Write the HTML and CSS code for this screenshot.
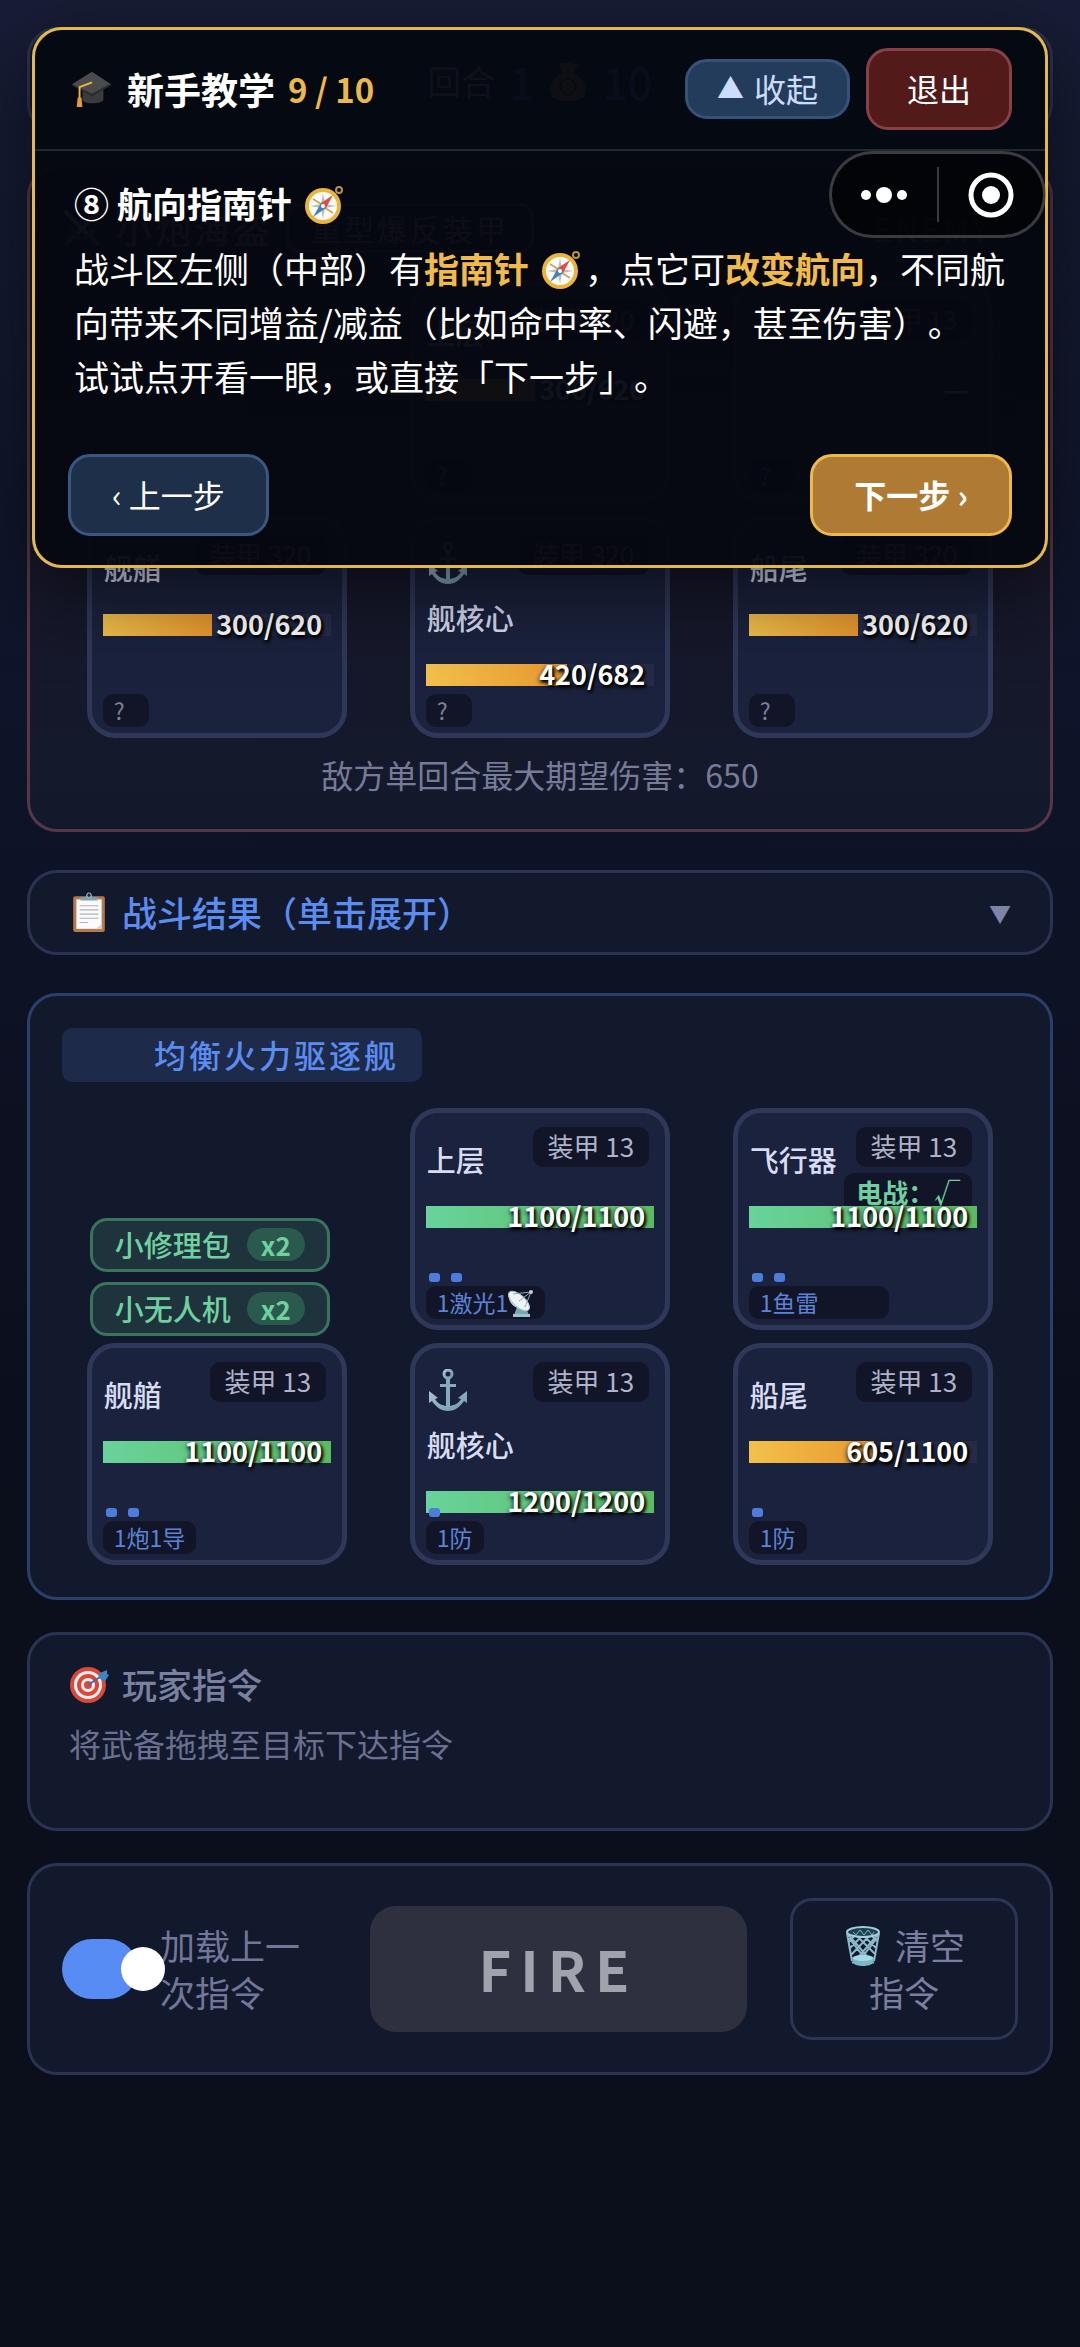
FILE: index.html
```html
<!DOCTYPE html>
<html lang="zh-CN">
<head>
    <meta charset="UTF-8">
    <meta name="viewport" content="width=device-width, initial-scale=1.0">
    <title>新手教学</title>
    <link rel="stylesheet" href="styles.css">
</head>
<body>

    <!-- shared icons -->
    <svg class="icon-defs" aria-hidden="true">
        <linearGradient id="steel" x1="0" y1="0" x2="1" y2="1">
            <stop offset="0" stop-color="#a9c3cf"/>
            <stop offset="1" stop-color="#6f98ab"/>
        </linearGradient>
        <symbol id="icon-cap" viewBox="0 0 42 38">
            <path d="M12 20v11c4 4 17 4 22 0V18l-12 6z" fill="#3a3b3d"/>
            <path d="M22 1l20 13-20 12L1 14z" fill="#4a4b4c"/>
            <path d="M22 24l20-11v2L22 27 1 15v-1z" fill="#2b2c2e"/>
            <path d="M22 12L9 17v12" fill="none" stroke="#f0b83c" stroke-width="2"/>
            <path d="M7 28h4l1 10H6z" fill="#dfa033"/>
        </symbol>
        <symbol id="icon-compass" viewBox="0 0 40 40">
            <circle cx="35" cy="5" r="3" fill="none" stroke="#b89343" stroke-width="2"/>
            <circle cx="19" cy="21" r="18" fill="#e9b53c"/>
            <circle cx="19" cy="21" r="14" fill="#fbfbf6"/>
            <path d="M19 8l2 11 11 2-11 2-2 11-2-11-11-2 11-2z" fill="#b9bec2"/>
            <path d="M9 14l8 5M29 28l-8-5" stroke="#c4a770" stroke-width="2"/>
            <path d="M29 10l-7 13-5-5z" fill="#dd4f45"/>
            <path d="M9 32l8-14 5 5z" fill="#4683ad"/>
            <circle cx="19" cy="21" r="2" fill="#fff"/>
        </symbol>
        <symbol id="icon-anchor" viewBox="0 0 38 42">
            <circle cx="19" cy="5" r="4" fill="none" stroke="url(#steel)" stroke-width="3"/>
            <path d="M17 9h4v28h-4zM11 15h16v3H11z" fill="#86aab9"/>
            <path d="M0 22l9 7-3 1c3 5 8 7 13 7s10-2 13-7l-3-1 9-7v12l-3-2c-4 6-9 10-16 10S7 38 3 32l-3 2z" fill="url(#steel)"/>
        </symbol>
        <symbol id="icon-clipboard" viewBox="0 0 30 38">
            <rect y="4" width="30" height="34" rx="2" fill="#b5794c"/>
            <path d="M3 7h24v28H3z" fill="#fafafa"/>
            <path d="M27 30v5h-5z" fill="#cfd4d8"/>
            <path d="M6 13h18M6 17h18M6 21h18M6 25h18M6 29h8" stroke="#aeb4b9"/>
            <path d="M7 8V5h5a3 3 0 0 1 6 0h5v3z" fill="#7fa5b5"/>
            <circle cx="15" cy="3" r="2" fill="#1a2135" stroke="#8fb3c1"/>
        </symbol>
        <symbol id="icon-target" viewBox="0 0 40 38">
            <circle cx="19" cy="20" r="18" fill="#d9483b"/>
            <circle cx="19" cy="20" r="14" fill="#f7efee"/>
            <circle cx="19" cy="20" r="11" fill="#d9483b"/>
            <circle cx="19" cy="20" r="7" fill="#f7efee"/>
            <circle cx="19" cy="20" r="4" fill="#d9483b"/>
            <path d="M19 20l12-8" stroke="#2f76b3" stroke-width="2"/>
            <path d="M29 13l2-5 7-3v4l2 1-4 6z" fill="#3b86c6"/>
        </symbol>
        <symbol id="icon-bin" viewBox="0 0 36 40">
            <path d="M2 7l5 28M34 7l-5 28M4 12L18 30l11 7M2 7l24 28M10 8l21 21M18 9l14 14M26 9l7 7M32 12L18 30 7 37M34 7L10 35M26 8L6 29M18 9L4 23M10 9l-6 7" fill="none" stroke="#8bb8c6" stroke-width="2"/>
            <ellipse cx="18" cy="6" rx="16" ry="5" fill="#1c4150" stroke="#a3cdd9" stroke-width="2"/>
            <path d="M8 6l3 3 4-5 4 5 4-5 4 5 2-3" fill="none" stroke="#86b4c3"/>
            <path d="M7 32c2-4 20-4 22 0l-1 5c-3 4-17 4-20 0z" fill="#7db6c7"/>
            <ellipse cx="18" cy="32" rx="10" ry="3" fill="#a6d9e6"/>
        </symbol>
        <symbol id="icon-dish" viewBox="0 0 26 28">
            <path d="M9 18l-3 8h15l-4-9z" fill="#7aa5b4"/>
            <path d="M5 25h17v3H5z" fill="#9ec3cf"/>
            <path d="M1 4c-2 9 5 17 19 17z" fill="#cfe0e5"/>
            <ellipse cx="11" cy="12" rx="13" ry="6" transform="rotate(42 11 12)" fill="#eef4f5" stroke="#a9c2ca"/>
            <path d="M11 12l12-9M17 18l6-15M5 5l18-2" stroke="#8fa9b2" fill="none"/>
            <circle cx="23" cy="3" r="2" fill="#bcd0d6"/>
        </symbol>
        <symbol id="icon-money" viewBox="0 0 40 42">
            <path d="M14 12L10 2h8l4-2 3 3h6l-5 9c10 6 14 14 12 22-2 7-10 8-18 8S4 41 2 34C0 26 4 18 14 12z" fill="#e0b040"/>
            <circle cx="20" cy="27" r="8" fill="none" stroke="#5c4410" stroke-width="2"/>
        </symbol>
        <symbol id="icon-swords" viewBox="0 0 40 40">
            <path d="M3 3l24 25M37 3L13 28" stroke="#a8bcc6" stroke-width="4"/>
            <path d="M22 31l9-9M18 31l-9-9M28 28l9 9M12 28l-9 9" stroke="#7d6a55" stroke-width="4"/>
        </symbol>
    </svg>

    <main class="page">
        <section class="panel status">
            <span>回合</span> <b>1</b>
            <svg class="icon"><use href="#icon-money"/></svg> <b>10</b>
        </section>

        <section class="panel enemy">
            <header class="ship-head">
                <svg class="icon"><use href="#icon-swords"/></svg>
                <h2 class="enemy-name">小炮海盗</h2>
                <span class="enemy-type">重型爆反装甲</span>
                <span class="enemy-label">ENEMY</span>
            </header>
            <div class="grid">
                <div></div>
                <article class="part">
                    <h3>上层</h3>
                    <div class="badges"><span class="badge">装甲 320</span></div>
                    <div class="hp"><div class="hp-fill mid" style="width: 48%"></div><span>300/620</span></div>
                    <div class="foot"><span class="tag unknown">?</span></div>
                </article>
                <article class="part">
                    <h3>&nbsp;</h3>
                    <div class="badges"><span class="badge">装甲 13</span></div>
                    <div class="hp none"><span>—</span></div>
                    <div class="foot"><span class="tag unknown">?</span></div>
                </article>
                <article class="part">
                    <h3>舰艏</h3>
                    <div class="badges"><span class="badge">装甲 320</span></div>
                    <div class="hp"><div class="hp-fill mid" style="width: 48%"></div><span>300/620</span></div>
                    <div class="foot"><span class="tag unknown">?</span></div>
                </article>
                <article class="part">
                    <h3><svg class="anchor"><use href="#icon-anchor"/></svg>舰核心</h3>
                    <div class="badges"><span class="badge">装甲 320</span></div>
                    <div class="hp"><div class="hp-fill mid" style="width: 62%"></div><span>420/682</span></div>
                    <div class="foot"><span class="tag unknown">?</span></div>
                </article>
                <article class="part">
                    <h3>船尾</h3>
                    <div class="badges"><span class="badge">装甲 320</span></div>
                    <div class="hp"><div class="hp-fill mid" style="width: 48%"></div><span>300/620</span></div>
                    <div class="foot"><span class="tag unknown">?</span></div>
                </article>
            </div>
            <p class="expect">敌方单回合最大期望伤害：650</p>
        </section>

        <button type="button" class="panel log">
            <svg class="icon"><use href="#icon-clipboard"/></svg>
            <span class="log-title">战斗结果（单击展开）</span>
            <span class="log-arrow">▼</span>
        </button>

        <section class="panel player">
            <header class="ship-head">
                <h2 class="player-name">均衡火力驱逐舰</h2>
            </header>
            <div class="grid">
                <div class="items">
                    <button type="button" class="item">小修理包 <span>x2</span></button>
                    <button type="button" class="item">小无人机 <span>x2</span></button>
                </div>
                <article class="part">
                    <h3>上层</h3>
                    <div class="badges"><span class="badge">装甲 13</span></div>
                    <div class="hp"><div class="hp-fill" style="width: 100%"></div><span>1100/1100</span></div>
                    <div class="foot">
                        <div class="dots"><i></i><i></i></div>
                        <span class="tag">1激光1<svg class="dish"><use href="#icon-dish"/></svg></span>
                    </div>
                </article>
                <article class="part">
                    <h3>飞行器</h3>
                    <div class="badges"><span class="badge">装甲 13</span><span class="badge ew">电战：√</span></div>
                    <div class="hp"><div class="hp-fill" style="width: 100%"></div><span>1100/1100</span></div>
                    <div class="foot">
                        <div class="dots"><i></i><i></i></div>
                        <span class="tag wide">1鱼雷</span>
                    </div>
                </article>
                <article class="part">
                    <h3>舰艏</h3>
                    <div class="badges"><span class="badge">装甲 13</span></div>
                    <div class="hp"><div class="hp-fill" style="width: 100%"></div><span>1100/1100</span></div>
                    <div class="foot">
                        <div class="dots"><i></i><i></i></div>
                        <span class="tag">1炮1导</span>
                    </div>
                </article>
                <article class="part">
                    <h3><svg class="anchor"><use href="#icon-anchor"/></svg>舰核心</h3>
                    <div class="badges"><span class="badge">装甲 13</span></div>
                    <div class="hp"><div class="hp-fill" style="width: 100%"></div><span>1200/1200</span></div>
                    <div class="foot">
                        <div class="dots"><i></i></div>
                        <span class="tag">1防</span>
                    </div>
                </article>
                <article class="part">
                    <h3>船尾</h3>
                    <div class="badges"><span class="badge">装甲 13</span></div>
                    <div class="hp"><div class="hp-fill mid" style="width: 55%"></div><span>605/1100</span></div>
                    <div class="foot">
                        <div class="dots"><i></i></div>
                        <span class="tag">1防</span>
                    </div>
                </article>
            </div>
        </section>

        <section class="panel orders">
            <h2><svg class="icon"><use href="#icon-target"/></svg>玩家指令</h2>
            <p>将武备拖拽至目标下达指令</p>
        </section>

        <section class="panel actions">
            <div class="reload">
                <input type="checkbox" id="reload" class="switch" checked>
                <label for="reload">加载上一次指令</label>
            </div>
            <button type="button" class="fire" disabled>FIRE</button>
            <button type="button" class="clear"><svg class="icon"><use href="#icon-bin"/></svg> 清空<br>指令</button>
        </section>
    </main>

    <aside class="guide">
        <header class="guide-head">
            <svg class="icon"><use href="#icon-cap"/></svg>
            <h1>新手教学</h1>
            <span class="step">9 / 10</span>
            <button type="button" class="btn fold"><span>▲</span>收起</button>
            <button type="button" class="btn quit">退出</button>
        </header>
        <div class="guide-body">
            <h2>⑧ 航向指南针 <svg class="compass"><use href="#icon-compass"/></svg></h2>
            <p>战斗区左侧（中部）有<b>指南针 <svg class="compass"><use href="#icon-compass"/></svg></b>，点它可<b>改变航向</b>，不同航向带来不同增益/减益（比如命中率、闪避，甚至伤害）。<br>试试点开看一眼，或直接「下一步」。</p>
        </div>
        <footer class="guide-foot">
            <button type="button" class="btn prev">‹ 上一步</button>
            <button type="button" class="btn next">下一步 ›</button>
        </footer>
    </aside>

    <div class="capsule">
        <button type="button" aria-label="更多">
            <svg width="46" height="18" viewBox="0 0 46 18" fill="#fff"><circle cx="5" cy="9" r="5"/><circle cx="23" cy="9" r="8"/><circle cx="41" cy="9" r="5"/></svg>
        </button>
        <button type="button" aria-label="关闭">
            <svg width="46" height="46" viewBox="0 0 46 46"><circle cx="23" cy="23" r="20" fill="none" stroke="#fff" stroke-width="5"/><circle cx="23" cy="23" r="9" fill="#fff"/></svg>
        </button>
    </div>

</body>
</html>
```
FILE: styles.css
```css
* {
    box-sizing: border-box;
}
body {
    margin: 0;
    min-height: 100vh;
    font-family: "Noto Sans CJK SC", sans-serif;
    background: linear-gradient(180deg, #181d36 0%, #0e1429 30%, #0b0e1b 65%, #0b0e1b 100%);
    color: #d9ddf0;
    text-spacing-trim: space-all;
}
h1, h2, h3, p {
    margin: 0;
}
button {
    font-family: inherit;
    margin: 0;
    cursor: pointer;
}
.icon-defs {
    position: absolute;
    width: 0;
    height: 0;
}
.icon {
    width: 40px;
    height: 40px;
    flex: none;
}

/* panels */
.page {
    display: flex;
    flex-direction: column;
    gap: 32px;
    padding: 27px;
}
.panel {
    background: #13192c;
    border: 3px solid #2b3352;
    border-radius: 30px;
    padding: 32px;
}
.status {
    display: flex;
    align-items: center;
    justify-content: center;
    gap: 14px;
    height: 107px;
    font-size: 34px;
}
.status b {
    font-size: 44px;
    font-weight: 500;
    color: #5b8cf5;
}
.enemy {
    background: linear-gradient(180deg, #24172a 0%, #17182b 65%, #13192c 100%);
    border-color: #573747;
}
.player {
    border-color: #28406a;
}
.ship-head {
    display: flex;
    align-items: center;
    gap: 14px;
    height: 54px;
    margin-bottom: 26px;
}
.enemy-name {
    font-size: 36px;
    font-weight: 500;
    letter-spacing: 3px;
    color: #e06a6a;
}
.enemy-type {
    border: 3px solid #6b3b48;
    border-radius: 14px;
    padding: 0 22px;
    line-height: 44px;
    font-size: 30px;
    letter-spacing: 3px;
    color: #d08a8a;
}
.enemy-label {
    margin-left: auto;
    padding-right: 26px;
    font-size: 32px;
    letter-spacing: 3px;
    color: #b06470;
}
.player-name {
    padding: 0 23px 0 92px;
    border-radius: 10px;
    background: #1d2a49;
    font-size: 32px;
    font-weight: 500;
    line-height: 52px;
    padding-bottom: 2px;
    letter-spacing: 3px;
    color: #5b8cf0;
}
.grid {
    display: grid;
    grid-template-columns: repeat(3, 1fr);
    grid-auto-rows: 222px;
    gap: 13px;
}
.expect {
    margin-top: 13px;
    text-align: center;
    font-size: 32px;
    line-height: 46px;
    color: #767b98;
}

/* ship parts */
.part {
    position: relative;
    justify-self: center;
    width: 84%;
    padding: 21px 11px 0;
    border: 5px solid #2f3858;
    border-radius: 28px;
    background: #1b223d;
}
.part h3 {
    display: flex;
    flex-direction: column;
    margin-bottom: 22px;
    padding-left: 1px;
    font-size: 29px;
    font-weight: 500;
    line-height: 50px;
    color: #d8dcf2;
}
.anchor {
    width: 42px;
    height: 42px;
    margin: 0 0 8px;
}
.badges {
    position: absolute;
    top: 14px;
    right: 16px;
    display: flex;
    flex-direction: column;
    align-items: flex-end;
    gap: 6px;
}
.badge {
    padding: 0 15px 2px;
    border-radius: 10px;
    background: #111527;
    font-size: 26px;
    line-height: 38px;
    color: #aeb3ca;
}
.enemy .badge {
    color: #d07070;
}
.badge.ew {
    padding: 0 12px 2px;
    font-weight: 700;
    color: #6fcf9f;
}
.hp {
    position: relative;
    height: 22px;
    background: #262c48;
}
.hp-fill {
    height: 22px;
    background: linear-gradient(90deg, #68d39b, #5cba5f);
}
.hp-fill.mid {
    background: linear-gradient(90deg, #f2c14b, #e8982f);
}
.hp span {
    position: absolute;
    top: 0;
    right: 9px;
    font-size: 27px;
    font-weight: 700;
    line-height: 20px;
    color: #fff;
    text-shadow: 0 2px 5px #000, 2px 2px 3px #000;
}
.hp.none {
    background: none;
}
.foot {
    position: absolute;
    left: 11px;
    bottom: 6px;
}
.dots {
    display: flex;
    gap: 11px;
    padding: 0 0 4px 3px;
}
.dots i {
    width: 11px;
    height: 9px;
    border-radius: 3px;
    background: #4d7ddb;
}
.tag {
    display: flex;
    align-items: center;
    width: max-content;
    min-width: 46px;
    padding: 0 11px;
    border-radius: 10px;
    background: #111527;
    font-size: 23px;
    line-height: 33px;
    color: #5c83d6;
}
.tag.unknown {
    color: #7c819b;
}
.tag.wide {
    min-width: 140px;
}
.dish {
    width: 26px;
    height: 28px;
}

/* consumables */
.items {
    display: flex;
    flex-direction: column;
    align-items: flex-start;
    justify-self: center;
    align-self: end;
    gap: 10px;
    width: 84%;
    margin-bottom: -6px;
    padding-left: 3px;
}
.item {
    display: flex;
    align-items: center;
    gap: 16px;
    height: 54px;
    padding: 0 22px 2px;
    border: 3px solid #3a745f;
    border-radius: 17px;
    background: #1e333b;
    font-size: 29px;
    font-weight: 500;
    color: #6fd0a0;
}
.item span {
    padding: 0 14px;
    border-radius: 17px;
    background: #2a594d;
    font-size: 26px;
    font-weight: 700;
    line-height: 33px;
}

/* battle log, collapsed */
.log {
    display: flex;
    align-items: center;
    gap: 13px;
    width: 100%;
    height: 85px;
    margin: 6px 0;
    padding: 0 39px 2px;
    text-align: left;
}
.log-title {
    font-size: 35px;
    font-weight: 500;
    color: #5b8cf0;
}
.log-arrow {
    margin-left: auto;
    font-size: 22px;
    color: #7d84a6;
}

.orders {
    height: 199px;
    padding: 22px 39px;
    color: #7a80a0;
}
.orders h2 {
    display: flex;
    align-items: center;
    gap: 13px;
    margin-bottom: 9px;
    font-size: 35px;
    font-weight: 500;
    line-height: 54px;
}
.orders p {
    font-size: 32px;
    line-height: 46px;
    color: #6b7090;
}

.actions {
    display: flex;
    align-items: center;
    gap: 43px;
}
.reload {
    display: flex;
    align-items: center;
    width: 265px;
    color: #71769a;
    font-size: 35px;
    line-height: 47px;
}
.reload label {
    width: 140px;
    padding-bottom: 2px;
}
.switch {
    appearance: none;
    position: relative;
    flex: none;
    width: 76px;
    height: 60px;
    margin: 0 22px 0 0;
    border-radius: 30px;
    background: #568cf3;
}
.switch::after {
    content: "";
    position: absolute;
    top: 8px;
    left: 59px;
    width: 44px;
    height: 44px;
    border-radius: 50%;
    background: #fff;
}
.fire {
    flex: 1;
    height: 126px;
    padding: 0 0 4px;
    border: none;
    border-radius: 26px;
    background: #2e3040;
    font-size: 56px;
    font-weight: 700;
    letter-spacing: 9px;
    color: #a0a3ac;
}
.clear {
    width: 228px;
    padding: 20px 0 22px;
    border: 3px solid #2d3454;
    border-radius: 22px;
    background: none;
    font-size: 35px;
    line-height: 47px;
    color: #7a7f9f;
}
.clear .icon {
    margin-right: 4px;
    vertical-align: -6px;
}

/* tutorial overlay */
.guide {
    position: absolute;
    top: 27px;
    left: 32px;
    right: 32px;
    border: 3px solid #e3b94f;
    border-radius: 30px;
    background: rgba(5, 8, 17, 0.96);
    box-shadow: 0 24px 80px rgba(0, 0, 0, 0.55);
    color: #fff;
}
.guide-head {
    display: flex;
    align-items: center;
    height: 121px;
    padding: 0 33px 2px 36px;
    border-bottom: 2px solid #262831;
}
.guide-head h1 {
    margin: 0 13px 0 16px;
    font-size: 37px;
    font-weight: 700;
}
.step {
    font-size: 33px;
    font-weight: 700;
    color: #eab949;
}
.btn {
    height: 82px;
    padding: 0 41px 2px;
    border: 3px solid;
    border-radius: 22px;
    font-size: 32px;
    color: #fff;
}
.fold {
    display: flex;
    align-items: center;
    gap: 10px;
    height: 60px;
    margin: 0 16px 0 auto;
    padding: 0 29px 2px;
    background: #243c5b;
    border-color: #365279;
    color: #cbdcff;
}
.fold span {
    font-size: 27px;
}
.quit {
    padding: 0 38px 2px;
    background: #521a19;
    border-color: #864046;
}
.guide-body {
    padding: 25px 34px 0 39px;
    font-size: 35px;
    line-height: 54px;
}
.guide-body h2 {
    margin-bottom: 11px;
    font-size: 35px;
    font-weight: 700;
    line-height: 54px;
}
.guide-body b {
    color: #f0bb4b;
}
.compass {
    width: 40px;
    height: 40px;
    margin: 0 4px;
    vertical-align: -7px;
}
.guide-foot {
    display: flex;
    justify-content: space-between;
    padding: 51px 33px 29px;
}
.prev {
    background: #1e3049;
    border-color: #3b5680;
}
.next {
    background: #ae7a34;
    border-color: #ecb94c;
    font-weight: 700;
}

/* host app capsule */
.capsule {
    position: absolute;
    top: 151px;
    right: 34px;
    display: flex;
    width: 217px;
    height: 87px;
    padding: 13px 0;
    border: 3px solid rgba(255, 255, 255, 0.22);
    border-radius: 44px;
    background: rgba(0, 0, 0, 0.5);
}
.capsule button {
    flex: 1;
    display: flex;
    align-items: center;
    justify-content: center;
    padding: 0;
    border: none;
    background: none;
}
.capsule button + button {
    border-left: 2px solid rgba(255, 255, 255, 0.22);
}
```
